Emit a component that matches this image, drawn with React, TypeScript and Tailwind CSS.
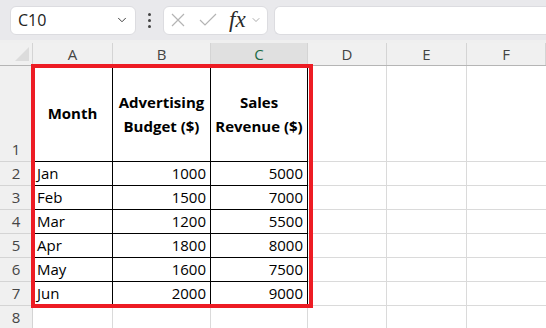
import { ChevronDown } from "lucide-react";

const cols = [
  { key: "A", w: "w-[80px]" },
  { key: "B", w: "w-[98px]" },
  { key: "C", w: "w-[97px]" },
  { key: "D", w: "w-[79px]" },
  { key: "E", w: "w-[80px]" },
  { key: "F", w: "flex-1" },
];

const data = [
  ["Jan", "1000", "5000"],
  ["Feb", "1500", "7000"],
  ["Mar", "1200", "5500"],
  ["Apr", "1800", "8000"],
  ["May", "1600", "7500"],
  ["Jun", "2000", "9000"],
];

const font = { fontFamily: '"Open Sans", "Liberation Sans", sans-serif' };

function RowHead({ n, h, bottom }: { n: number; h: string; bottom?: boolean }) {
  return (
    <div
      className={`w-[33px] shrink-0 ${h} bg-[#f0f0f0] border-r border-b border-[#d4d4d4] flex justify-center text-[15px] text-[#454545] ${
        bottom ? "items-end pb-[1px]" : "items-center"
      }`}
    >
      {n}
    </div>
  );
}

function Toolbar() {
  return (
    <div className="h-[40px] bg-[#e9e9ec] flex items-center gap-0 px-[10px] pt-[0px]">
      <div className="w-[126px] h-[29px] bg-white rounded-[6px] border border-[#dcdce0] flex items-center justify-between pl-[7px] pr-[6px]">
        <span className="text-[16px] text-[#222]">C10</span>
        <ChevronDown size={14} strokeWidth={1.6} className="text-[#333]" />
      </div>
      <div className="w-[27px] flex flex-col items-center gap-[3px]">
        <span className="w-[3px] h-[3px] bg-[#444] rounded-full" />
        <span className="w-[3px] h-[3px] bg-[#444] rounded-full" />
        <span className="w-[3px] h-[3px] bg-[#444] rounded-full" />
      </div>
      <div className="w-[105px] h-[29px] bg-white rounded-[6px] border border-[#dcdce0] flex items-center pl-[6px]">
        <svg width="16" height="16" viewBox="0 0 16 16" className="mr-[12px]">
          <path d="M2 2 L14 14 M14 2 L2 14" stroke="#b4b4b4" strokeWidth="1.2" fill="none" />
        </svg>
        <svg width="20" height="16" viewBox="0 0 20 16" className="mr-[11px]">
          <path d="M2 8 L7 13 L18 2" stroke="#b4b4b4" strokeWidth="1.2" fill="none" />
        </svg>
        <span
          className="italic text-[23px] text-[#2a2a2a] leading-none -mt-[2px]"
          style={{ fontFamily: '"Liberation Serif", serif' }}
        >
          fx
        </span>
        <ChevronDown size={12} strokeWidth={1.4} className="text-[#888] ml-[4px]" />
      </div>
      <div className="flex-1 ml-[6px] h-[29px] bg-white rounded-l-[6px] border border-r-0 border-[#dcdce0] -mr-[10px]" />
    </div>
  );
}

export default function App() {
  return (
    <div className="w-[546px] h-[328px] bg-white overflow-hidden relative" style={font}>
      <Toolbar />
      <div className="h-[3px] bg-[#efefef]" />
      {/* column headers */}
      <div className="flex h-[23px] border-b border-[#b5b5b5] bg-[#f0f0f0]">
        <div className="w-[33px] shrink-0 border-r border-[#d4d4d4] relative">
          <svg width="16" height="16" viewBox="0 0 16 16" className="absolute right-[2px] bottom-[3px]">
            <path d="M15 1 L15 15 L1 15 Z" fill="#dcdcdc" />
          </svg>
        </div>
        {cols.map((c) => (
          <div
            key={c.key}
            className={`${c.w} shrink-0 border-r border-[#d4d4d4] flex items-center justify-center text-[15px] ${
              c.key === "C" ? "bg-[#e0e0e0] text-[#1d6b45]" : "text-[#444]"
            }`}
          >
            {c.key}
          </div>
        ))}
      </div>
      {/* row 1 */}
      <div className="flex">
        <RowHead n={1} h="h-[96px]" bottom />
        <div className="w-[80px] h-[96px] border-r border-b border-black flex items-center justify-center font-bold text-[15px] text-black">
          Month
        </div>
        <div className="w-[98px] h-[96px] border-r border-b border-black flex items-center justify-center text-center font-bold text-[15px] leading-[24px] text-black">
          Advertising
          <br />
          Budget ($)
        </div>
        <div className="w-[97px] h-[96px] border-r border-b border-black flex items-center justify-center text-center font-bold text-[15px] leading-[24px] text-black">
          Sales
          <br />
          Revenue ($)
        </div>
        <div className="w-[79px] h-[96px] border-r border-b border-[#dadada]" />
        <div className="w-[80px] h-[96px] border-r border-b border-[#dadada]" />
        <div className="flex-1 h-[96px] border-b border-[#dadada]" />
      </div>
      {data.map((r, i) => (
        <div key={r[0]} className="flex">
          <RowHead n={i + 2} h="h-[24px]" />
          <div className="w-[80px] h-[24px] border-r border-b border-black flex items-center pl-[4px] text-[15px] text-black">
            {r[0]}
          </div>
          <div className="w-[98px] h-[24px] border-r border-b border-black flex items-center justify-end pr-[4px] text-[15px] text-black">
            {r[1]}
          </div>
          <div className="w-[97px] h-[24px] border-r border-b border-black flex items-center justify-end pr-[4px] text-[15px] text-black">
            {r[2]}
          </div>
          <div className="w-[79px] h-[24px] border-r border-b border-[#dadada]" />
          <div className="w-[80px] h-[24px] border-r border-b border-[#dadada]" />
          <div className="flex-1 h-[24px] border-b border-[#dadada]" />
        </div>
      ))}
      <div className="flex">
        <RowHead n={8} h="h-[24px]" />
        <div className="w-[80px] h-[24px] border-r border-[#dadada]" />
        <div className="w-[98px] h-[24px] border-r border-[#dadada]" />
        <div className="w-[97px] h-[24px] border-r border-[#dadada]" />
        <div className="w-[79px] h-[24px] border-r border-[#dadada]" />
        <div className="w-[80px] h-[24px] border-r border-[#dadada]" />
      </div>
      {/* selection outline */}
      <div className="absolute left-[31px] top-[64px] w-[282px] h-[244px] border-4 border-[#ed1c24] pointer-events-none" />
    </div>
  );
}
